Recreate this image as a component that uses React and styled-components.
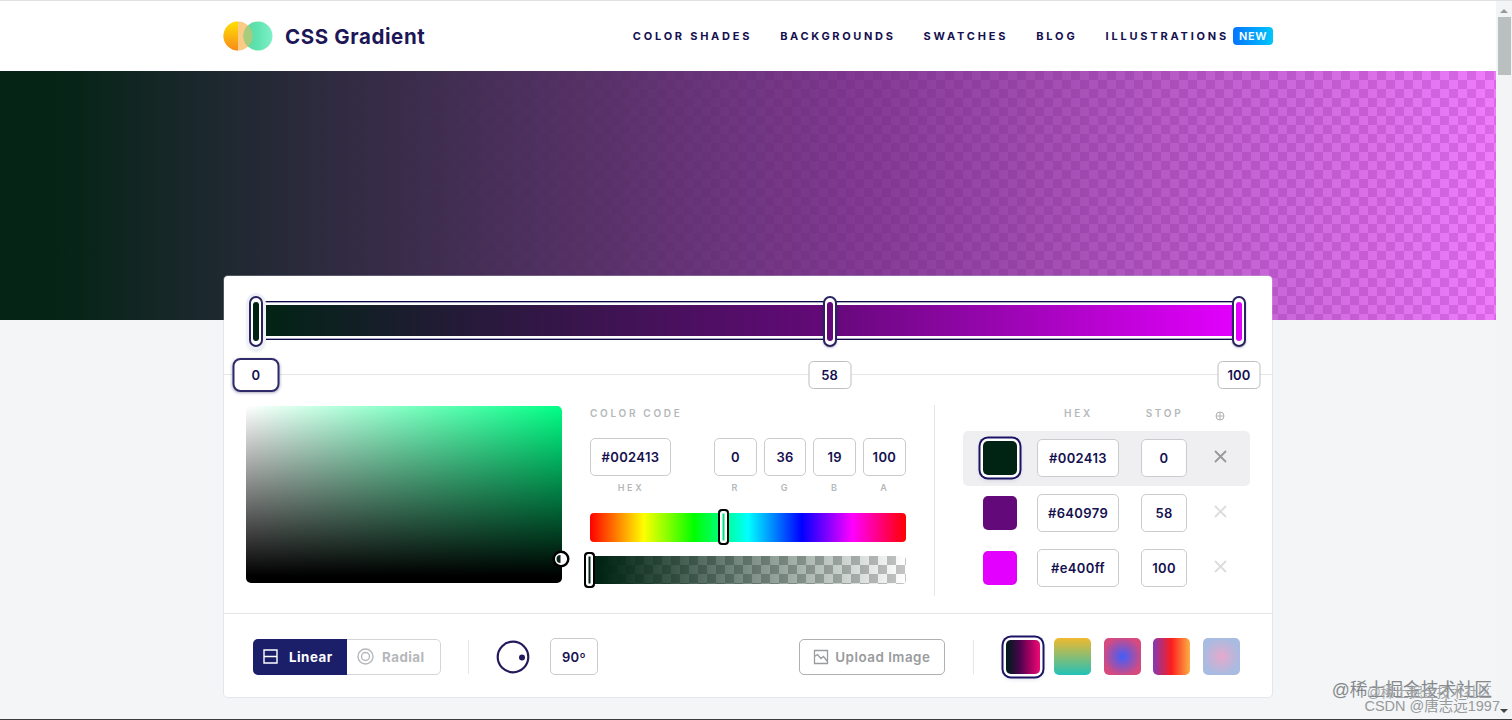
import React from "react"
import styled, { createGlobalStyle, css } from "styled-components"

const navy = "#1b1464"
const ink = "#15104f"
const muted = "#b4b8bb"

const GlobalStyle = createGlobalStyle`
* {
    box-sizing: border-box;
}
body {
    margin: 0;
    overflow: hidden;
    background: #f3f5f7;
    color: ${ink};
    font-family: Inter, "Liberation Sans", "Noto Sans CJK SC", sans-serif;
}
`

const Window = styled.div`
    display: flex;
    position: relative;
    width: 1512px;
    height: 720px;
    border-top: 1px solid #e0e0e0;
    border-bottom: 1px solid #3a3c3e;
    overflow: hidden;
`

const Page = styled.div`
    width: 1496px;
    background: #f3f5f7;
`

const Header = styled.header`
    display: flex;
    align-items: center;
    justify-content: space-between;
    height: 70px;
    padding: 0 223px;
    background: #fff;
`

const Brand = styled.div`
    display: flex;
    align-items: center;
    gap: 12px;
    color: #1d1758;
    font-size: 20.5px;
    font-weight: 700;
    letter-spacing: 0.6px;

    svg {
        display: block;
    }
`

const Nav = styled.nav`
    display: flex;
    align-items: center;
    gap: 28px;
`

const NavLink = styled.a`
    display: flex;
    align-items: center;
    font-size: 11px;
    font-weight: 700;
    white-space: nowrap;
    letter-spacing: ${(p) => p.$spacing}px;
`

const NewBadge = styled.span`
    width: 40px;
    height: 18px;
    margin-left: 4px;
    border-radius: 4px;
    background: linear-gradient(90deg, #0575ff, #00c6fb);
    color: #fff;
    font-size: 11px;
    font-weight: 600;
    line-height: 18px;
    letter-spacing: 0.6px;
    text-align: center;
`

const checker = (color, size) => css`
    background-image: ${(p) => p.$gradient},
        conic-gradient(${color} 25%, #fff 0 50%, ${color} 0 75%, #fff 0);
    background-size: 100% 100%, ${size}px ${size}px;
`

const Hero = styled.section`
    height: 249px;
    background-image: ${(p) => p.$gradient}, linear-gradient(90deg, #e5e5e5 20%, rgba(229, 229, 229, 0.2) 90%),
        conic-gradient(#cacaca 25%, #fff 0 50%, #cacaca 0 75%, #fff 0);
    background-size: 100% 100%, 100% 100%, 18px 18px;
`

const Card = styled.main`
    position: relative;
    width: 1048px;
    height: 421px;
    margin: -44px auto 0;
    padding-top: 25px;
    border-radius: 4px;
    background: #fff;
    box-shadow: 0 0 0 1px rgba(190, 200, 208, 0.3);
`

const Track = styled.div`
    position: relative;
    height: 39px;
    margin: 0 32px;
    padding: 3px 0;
    border: solid #0f0a48;
    border-width: 1px 0;
    box-shadow: inset 0 1px #a9a7c4, inset 0 -1px #a9a7c4;
`

const TrackFill = styled.div`
    height: 31px;
    background: linear-gradient(90deg, #002413 0%, #640979 58%, #e400ff 100%);
`

const Handle = styled.span`
    position: absolute;
    top: -6px;
    width: 14px;
    height: 51px;
    margin-left: -7px;
    padding: 4px 2px;
    border: 2px solid #29245f;
    border-radius: 8px;
    background: #fff;
    box-shadow: ${(p) => (p.$active ? "0 0 0 3px #eef0f6, 0 3px 4px rgba(20, 16, 79, 0.25)" : "0 1px 2px rgba(20, 16, 79, 0.3)")};

    &::before {
        content: "";
        display: block;
        height: 39px;
        border-radius: 3px;
        background: ${(p) => p.$color};
    }
`

const StopLine = styled.div`
    position: relative;
    height: 34px;
    margin-top: 18px;
    padding: 0 32px;

    &::before {
        content: "";
        position: absolute;
        inset: 16px 0 auto 0;
        height: 1px;
        background: #e4e7e9;
    }
`

const StopRail = styled.div`
    position: relative;
    height: 34px;
`

const StopBadge = styled.span`
    position: absolute;
    top: ${(p) => (p.$active ? 0 : 3)}px;
    display: flex;
    align-items: center;
    justify-content: center;
    width: ${(p) => (p.$active ? 47 : 43)}px;
    height: ${(p) => (p.$active ? 34 : 28)}px;
    border: ${(p) => (p.$active ? `2px solid #2f2a68` : "1px solid #bcbfc2")};
    border-radius: ${(p) => (p.$active ? 8 : 5)}px;
    background: #fff;
    box-shadow: ${(p) => (p.$active ? "0 1px 3px rgba(20, 16, 79, 0.35)" : "none")};
    font-size: 13px;
    font-weight: 600;
    letter-spacing: 0.2px;
    transform: translateX(-50%);
`

const Body = styled.div`
    display: flex;
    height: 208px;
    margin-top: 13px;
    padding-left: 22px;
`

const Picker = styled.div`
    position: relative;
    width: 316px;
    height: 177px;
    margin: 1px 28px 0 0;
    border-radius: 5px;
    background: linear-gradient(0deg, #000 4%, transparent), linear-gradient(90deg, #fff, #00ff86);
`

const PickerCursor = styled.svg`
    position: absolute;
    right: -8px;
    top: 144px;
`

const Codes = styled.div`
    width: 316px;
    padding-top: 2px;
`

const Caption = styled.div`
    color: ${muted};
    font-size: ${(p) => p.$size || 10}px;
    font-weight: 600;
    line-height: 12px;
    letter-spacing: 2.7px;
    text-align: ${(p) => p.$align || "center"};
    text-indent: ${(p) => (p.$align ? 0 : 1)}px;
`

const CodeRow = styled.div`
    display: flex;
    gap: 7px;
    margin: 19px 0 19px;
`

const CodeCell = styled.div`
    width: ${(p) => p.$width}px;
    margin-right: ${(p) => p.$gap || 0}px;

    ${Caption} {
        margin-top: 6px;
    }
`

const Field = styled.div`
    display: flex;
    align-items: center;
    justify-content: center;
    width: ${(p) => (p.$width ? `${p.$width}px` : "100%")};
    height: ${(p) => p.$height || 38}px;
    border: 1px solid #c9cccf;
    border-radius: 5px;
    background: #fff;
    font-size: 13px;
    font-weight: 600;
    letter-spacing: 0.35px;
`

const HueBar = styled.div`
    position: relative;
    height: 29px;
    border-radius: 4px;
    background: linear-gradient(90deg, #f00, #ff0 17%, #0f0 33%, #0ff 50%, #00f 67%, #f0f 83%, #f00);
`

const AlphaBar = styled.div`
    position: relative;
    height: 28px;
    margin-top: 14px;
    border-radius: 4px;
    ${checker("#c4c4c4", 18)}
`

const BarHandle = styled.span`
    position: absolute;
    top: -4px;
    width: 11px;
    height: 36px;
    margin-left: -6px;
    border: 2px solid #000;
    border-radius: 4px;
    background: ${(p) => p.$color};
    box-shadow: inset 0 0 0 2.5px #fff;
`

const Divider = styled.i`
    width: 1px;
    height: ${(p) => p.$height}px;
    margin-left: ${(p) => p.$indent || 0}px;
    background: #e3e5e8;
`

const StopTable = styled.div`
    width: 287px;
    margin-left: 28px;
`

const StopHead = styled.div`
    display: grid;
    grid-template-columns: 82px 46px 12px;
    column-gap: 22px;
    height: 26px;
    padding: 2px 0 0 74px;

    svg {
        margin: 4px 0 0 6px;
    }
`

const StopRow = styled.div`
    display: grid;
    grid-template-columns: 34px 82px 46px 14px;
    align-items: center;
    column-gap: 20px;
    height: 55px;
    padding: 0 0 1px 20px;
    border-radius: 5px;
    background: ${(p) => (p.$active ? "#efeff1" : "transparent")};

    ${Field}:nth-child(3) {
        margin-left: 2px;
    }
    svg {
        margin: -3px 0 0 9px;
        color: ${(p) => (p.$active ? "#96989b" : "#dadcde")};
    }
`

const Swatch = styled.span`
    width: ${(p) => p.$size}px;
    height: ${(p) => p.$size}px;
    border-radius: 5px;
    background: ${(p) => p.$fill};
    ${(p) =>
        p.$active &&
        css`
            box-shadow: 0 0 0 2.5px #fff, 0 0 0 4.5px ${navy}, 0 2px 5px 2px rgba(27, 20, 100, 0.25);
        `}
`

const Footer = styled.div`
    display: flex;
    align-items: center;
    height: 84px;
    padding: 2px 32px 0 29px;
    border-top: 1px solid #e4e7ea;
`

const Toggle = styled.div`
    display: flex;
    width: 188px;
    height: 36px;
    margin-right: 27px;
    border: 1px solid #d3d5d8;
    border-radius: 5px;
`

const ToggleItem = styled.button`
    display: flex;
    align-items: center;
    gap: ${(p) => (p.$active ? 11 : 8)}px;
    width: ${(p) => (p.$active ? 94 : 93)}px;
    height: 36px;
    margin: -1px 0 0 ${(p) => (p.$active ? -1 : 0)}px;
    padding: 0 0 0 10px;
    border: 0;
    border-radius: ${(p) => (p.$active ? "5px 0 0 5px" : "0 5px 5px 0")};
    background: ${(p) => (p.$active ? "#1b1e68" : "transparent")};
    color: ${(p) => (p.$active ? "#fff" : "#b5b7ba")};
    font: 700 13.3px Inter, sans-serif;
    letter-spacing: 0.5px;
`

const Dial = styled.svg`
    margin: 0 20px 0 27px;
`

const UploadButton = styled.button`
    display: flex;
    align-items: center;
    gap: 6px;
    width: 146px;
    height: 36px;
    margin: 0 28px 0 auto;
    padding: 0 0 0 13px;
    border: 1px solid #aeb1b4;
    border-radius: 5px;
    background: #fff;
    color: #999b9e;
    font: 600 13.4px Inter, sans-serif;
    letter-spacing: 0.5px;
    white-space: nowrap;
`

const Presets = styled.div`
    display: flex;
    align-items: center;
    gap: 12.7px;
    margin-left: 32px;

    ${Swatch}:first-child {
        margin-right: 1px;
    }
`

const Scrollbar = styled.aside`
    display: flex;
    flex-direction: column;
    align-items: center;
    justify-content: space-between;
    width: 16px;
    padding: 8px 0 6px;
    background: #f3f4f5;
`

const Thumb = styled.div`
    width: 13px;
    height: 58px;
    margin: 4px 0 auto;
    background: #babfc0;
`

const Arrow = styled.i`
    border: solid transparent;
    border-width: 0 4px;
    ${(p) => (p.$down ? "border-top: 4px solid #444" : "border-bottom: 4px solid #999")};
`

const Watermark = styled.div`
    position: absolute;
    right: ${(p) => p.$right}px;
    bottom: ${(p) => p.$bottom}px;
    color: ${(p) => p.$color};
    font-family: "Liberation Sans", "Noto Sans CJK SC", sans-serif;
    font-size: ${(p) => p.$size}px;
    line-height: 20px;
    white-space: nowrap;
`

const links = [
    { text: "COLOR SHADES", spacing: 2.75 },
    { text: "BACKGROUNDS", spacing: 2.65 },
    { text: "SWATCHES", spacing: 2.8 },
    { text: "BLOG", spacing: 2.85 },
]

const channels = [
    { label: "R", value: "0" },
    { label: "G", value: "36" },
    { label: "B", value: "19" },
    { label: "A", value: "100" },
]

const stops = [
    { hex: "#002413", stop: 0, left: 0, active: true },
    { hex: "#640979", stop: 58, left: 58.3 },
    { hex: "#e400ff", stop: 100, left: 99.9 },
]

const presets = [
    "linear-gradient(90deg, #021b1b 5%, #48054e 40%, #a30061 70%, #ee0a74)",
    "linear-gradient(180deg, #f0b92f, #22c1b8)",
    "radial-gradient(circle, #3f5efb, #d64a7f 75%)",
    "linear-gradient(90deg, #833ab4, #fd1d1d 50%, #fcb045)",
    "radial-gradient(circle, #e6a9cd, #a9bbe0 70%)",
]

const heroGradient =
    "linear-gradient(90deg, rgba(5, 36, 22, 1) 4%, rgba(100, 9, 121, 0.79) 57%, rgba(228, 0, 255, 0.5) 100%)"

const Logo = () => (
    <svg width="50" height="32" viewBox="0 0 50 32">
        <defs>
            <linearGradient id="sun" x1="0" y1="0" x2="0" y2="1">
                <stop offset="0" stopColor="#ffe100" />
                <stop offset="1" stopColor="#f78a1d" />
            </linearGradient>
            <linearGradient id="mint" x1="0" y1="0" x2="1" y2="0">
                <stop offset="0" stopColor="#5fd69c" />
                <stop offset="0.5" stopColor="#5fe3b0" />
                <stop offset="1" stopColor="#7ff0c8" />
            </linearGradient>
        </defs>
        <circle cx="15" cy="16" r="14.5" fill="#fbcb85" />
        <path d="M15 1.5a14.5 14.5 0 0 0 0 29z" fill="url(#sun)" />
        <circle cx="35" cy="16" r="14.5" fill="url(#mint)" />
        <path d="M25 5.5a14.5 14.5 0 0 1 0 21a14.5 14.5 0 0 1 0-21z" fill="#a9cb7c" />
    </svg>
)

const CrossIcon = () => (
    <svg width="13" height="13" viewBox="0 0 13 13" stroke="currentColor" strokeWidth="1.8">
        <path d="M1 1l11 11M12 1L1 12" />
    </svg>
)

const App = () => {
    return (
        <>
            <GlobalStyle />
            <Window>
                <Page>
                    <Header>
                        <Brand>
                            <Logo />
                            CSS Gradient
                        </Brand>
                        <Nav>
                            {links.map((link) => (
                                <NavLink key={link.text} $spacing={link.spacing}>{link.text}</NavLink>
                            ))}
                            <NavLink $spacing={2.8}>
                                ILLUSTRATIONS
                                <NewBadge>NEW</NewBadge>
                            </NavLink>
                        </Nav>
                    </Header>
                    <Hero $gradient={heroGradient} />
                    <Card>
                        <Track>
                            <TrackFill />
                            {stops.map((s) => (
                                <Handle key={s.hex} $color={s.hex} $active={s.active} style={{ left: `${s.left}%` }} />
                            ))}
                        </Track>
                        <StopLine>
                            <StopRail>
                                {stops.map((s) => (
                                    <StopBadge key={s.hex} $active={s.active} style={{ left: `${s.left}%` }}>
                                        {s.stop}
                                    </StopBadge>
                                ))}
                            </StopRail>
                        </StopLine>
                        <Body>
                            <Picker>
                                <PickerCursor width="18" height="18" viewBox="0 0 18 18">
                                    <circle cx="9" cy="9" r="7.3" fill="#fff" stroke="#000" strokeWidth="2.4" />
                                    <path d="M8.5 5a4 4 0 0 0 0 8z" fill="#0b2417" />
                                </PickerCursor>
                            </Picker>
                            <Codes>
                                <Caption $align="left">COLOR CODE</Caption>
                                <CodeRow>
                                    <CodeCell $width={81} $gap={36}>
                                        <Field>#002413</Field>
                                        <Caption $size={9}>HEX</Caption>
                                    </CodeCell>
                                    {channels.map((c) => (
                                        <CodeCell key={c.label} $width={42.7}>
                                            <Field>{c.value}</Field>
                                            <Caption $size={9}>{c.label}</Caption>
                                        </CodeCell>
                                    ))}
                                </CodeRow>
                                <HueBar>
                                    <BarHandle $color="#00e07a" style={{ left: "42.4%" }} />
                                </HueBar>
                                <AlphaBar $gradient="linear-gradient(90deg, #002413 3%, rgba(0, 36, 19, 0))">
                                    <BarHandle $color="#002413" style={{ left: 0 }} />
                                </AlphaBar>
                            </Codes>
                            <Divider $height={191} $indent={28} />
                            <StopTable>
                                <StopHead>
                                    <Caption>HEX</Caption>
                                    <Caption>STOP</Caption>
                                    <svg width="10" height="10" viewBox="0 0 10 10" fill="none" stroke="#aeb2b5">
                                        <circle cx="5" cy="5" r="4" />
                                        <path d="M5 1v8M1 5h8" />
                                    </svg>
                                </StopHead>
                                {stops.map((s) => (
                                    <StopRow key={s.hex} $active={s.active}>
                                        <Swatch $size={34} $fill={s.hex} $active={s.active} />
                                        <Field>{s.hex}</Field>
                                        <Field>{s.stop}</Field>
                                        <CrossIcon />
                                    </StopRow>
                                ))}
                            </StopTable>
                        </Body>
                        <Footer>
                            <Toggle>
                                <ToggleItem $active>
                                    <svg width="15" height="15" viewBox="0 0 15 15" fill="none" stroke="currentColor" strokeWidth="1.4">
                                        <path d="M1 1h13v13H1zM1 7.5h13" />
                                    </svg>
                                    Linear
                                </ToggleItem>
                                <ToggleItem>
                                    <svg width="17" height="17" viewBox="0 0 17 17" fill="none" stroke="currentColor" strokeWidth="1.4">
                                        <circle cx="8.5" cy="8.5" r="7.5" />
                                        <circle cx="8.5" cy="8.5" r="4" />
                                    </svg>
                                    Radial
                                </ToggleItem>
                            </Toggle>
                            <Divider $height={34} />
                            <Dial width="34" height="34" viewBox="0 0 34 34">
                                <circle cx="17" cy="17" r="15.3" fill="#fff" stroke="#231a5c" strokeWidth="2.2" />
                                <circle cx="26" cy="17.5" r="3" fill="#231a5c" />
                            </Dial>
                            <Field $width={48} $height={37}>90º</Field>
                            <UploadButton>
                                <svg width="16" height="16" viewBox="0 0 16 16" fill="none" stroke="currentColor" strokeWidth="1.3">
                                    <path d="M1.5 1.5h13v13h-13zM1.5 7.5l3-2 3.5 4 2.5-2 4 5" />
                                </svg>
                                Upload Image
                            </UploadButton>
                            <Divider $height={34} />
                            <Presets>
                                {presets.map((p, i) => (
                                    <Swatch key={p} $size={i === 0 ? 34 : 37} $fill={p} $active={i === 0} />
                                ))}
                            </Presets>
                        </Footer>
                    </Card>
                </Page>
                <Scrollbar>
                    <Arrow />
                    <Thumb />
                    <Arrow $down />
                </Scrollbar>
                <Watermark $size={17.8} $right={20} $bottom={19} $color="#85888a">@稀土掘金技术社区</Watermark>
                <Watermark $size={13.9} $right={20} $bottom={17} $color="#a2a5a7">@稀土掘金技术社区</Watermark>
                <Watermark $size={14.5} $right={12} $bottom={3} $color="#96999b">CSDN @唐志远1997</Watermark>
            </Window>
        </>
    )
}

export default App
